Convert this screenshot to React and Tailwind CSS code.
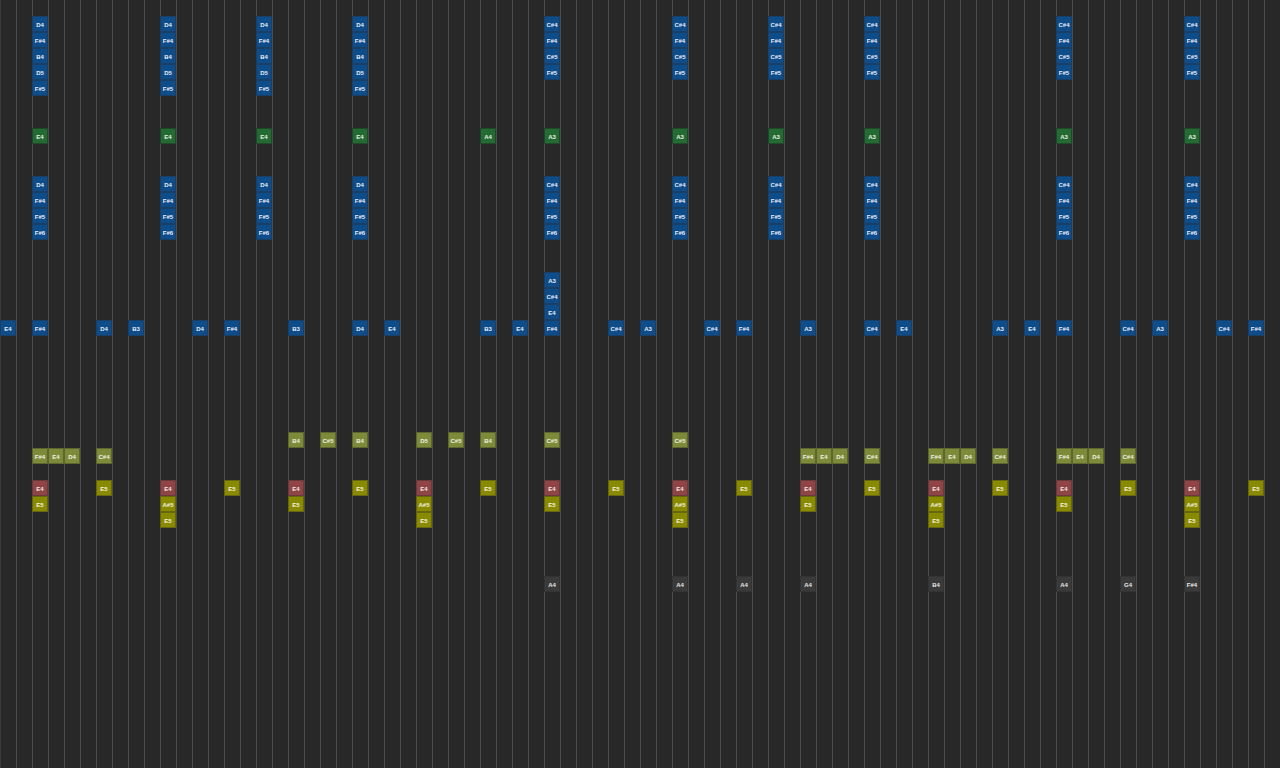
const C = {
  blue: "bg-[#0f4c8a] border-[#1a3f66] text-[#e8eef5]",
  green: "bg-[#236b32] border-[#1f4a2a] text-[#e8f0e8]",
  olive: "bg-[#7d8a3a] border-[#5e6630] text-[#f0f0e0]",
  red: "bg-[#8f4545] border-[#6a3a3a] text-[#f5e8e8]",
  yellow: "bg-[#8a8a00] border-[#66660f] text-[#f5f5e0]",
  gray: "bg-[#3a3a3a] border-[#333333] text-[#e8e8e8]",
};

const notes = {};
const put = (row, cols, label, color) => {
  cols.forEach((c) => {
    notes[`${row}:${c}`] = { label, color };
  });
};

const A = [2, 10, 16, 22];
const B = [34, 42, 48, 54, 66, 74];

["D4", "F#4", "B4", "D5", "F#5"].forEach((l, i) => put(1 + i, A, l, "blue"));
["C#4", "F#4", "C#5", "F#5"].forEach((l, i) => put(1 + i, B, l, "blue"));
put(8, A, "E4", "green");
put(8, [30], "A4", "green");
put(8, B, "A3", "green");
["D4", "F#4", "F#5", "F#6"].forEach((l, i) => put(11 + i, A, l, "blue"));
["C#4", "F#4", "F#5", "F#6"].forEach((l, i) => put(11 + i, B, l, "blue"));
put(17, [34], "A3", "blue");
put(18, [34], "C#4", "blue");
put(19, [34], "E4", "blue");
[
  [0, "E4"], [2, "F#4"], [6, "D4"], [8, "B3"], [12, "D4"], [14, "F#4"], [18, "B3"], [22, "D4"], [24, "E4"],
  [30, "B3"], [32, "E4"], [34, "F#4"], [38, "C#4"], [40, "A3"], [44, "C#4"], [46, "F#4"], [50, "A3"],
  [54, "C#4"], [56, "E4"], [62, "A3"], [64, "E4"], [66, "F#4"], [70, "C#4"], [72, "A3"], [76, "C#4"], [78, "F#4"],
].forEach(([c, l]) => put(20, [c], l, "blue"));
[
  [18, "B4"], [20, "C#5"], [22, "B4"], [26, "D5"], [28, "C#5"], [30, "B4"], [34, "C#5"], [42, "C#5"],
].forEach(([c, l]) => put(27, [c], l, "olive"));
[2, 50, 58, 66].forEach((c) => {
  put(28, [c], "F#4", "olive");
  put(28, [c + 1], "E4", "olive");
  put(28, [c + 2], "D4", "olive");
  put(28, [c + 4], "C#4", "olive");
});
put(30, [2, 10, 18, 26, 34, 42, 50, 58, 66, 74], "E4", "red");
put(30, [6, 14, 22, 30, 38, 46, 54, 62, 70, 78], "E5", "yellow");
put(31, [2, 18, 34, 50, 66], "E5", "yellow");
put(31, [10, 26, 42, 58, 74], "A#5", "yellow");
put(32, [10, 26, 42, 58, 74], "E5", "yellow");
[
  [34, "A4"], [42, "A4"], [46, "A4"], [50, "A4"], [58, "B4"], [66, "A4"], [70, "G4"], [74, "F#4"],
].forEach(([c, l]) => put(36, [c], l, "gray"));

const rows = Array.from({ length: 48 }, (_, r) => r);
const cols = Array.from({ length: 80 }, (_, c) => c);

export default function App() {
  return (
    <div className="w-[1280px] h-[768px] overflow-hidden bg-[#282828] font-['Liberation_Sans',sans-serif]">
      {rows.map((r) => (
        <div key={r} className="flex h-4">
          {cols.map((c) => {
            const n = notes[`${r}:${c}`];
            return (
              <div key={c} className={`w-4 h-4 shrink-0 border-l ${c === 0 ? "border-[#3a3a3a]" : "border-[#4d4d4d]"} relative`}>
                {n && (
                  <div
                    className={`absolute -left-px top-0 w-4 h-4 border pt-[2px] flex items-center justify-center text-[6px] leading-none font-bold ${C[n.color]}`}
                  >
                    {n.label}
                  </div>
                )}
              </div>
            );
          })}
        </div>
      ))}
    </div>
  );
}
